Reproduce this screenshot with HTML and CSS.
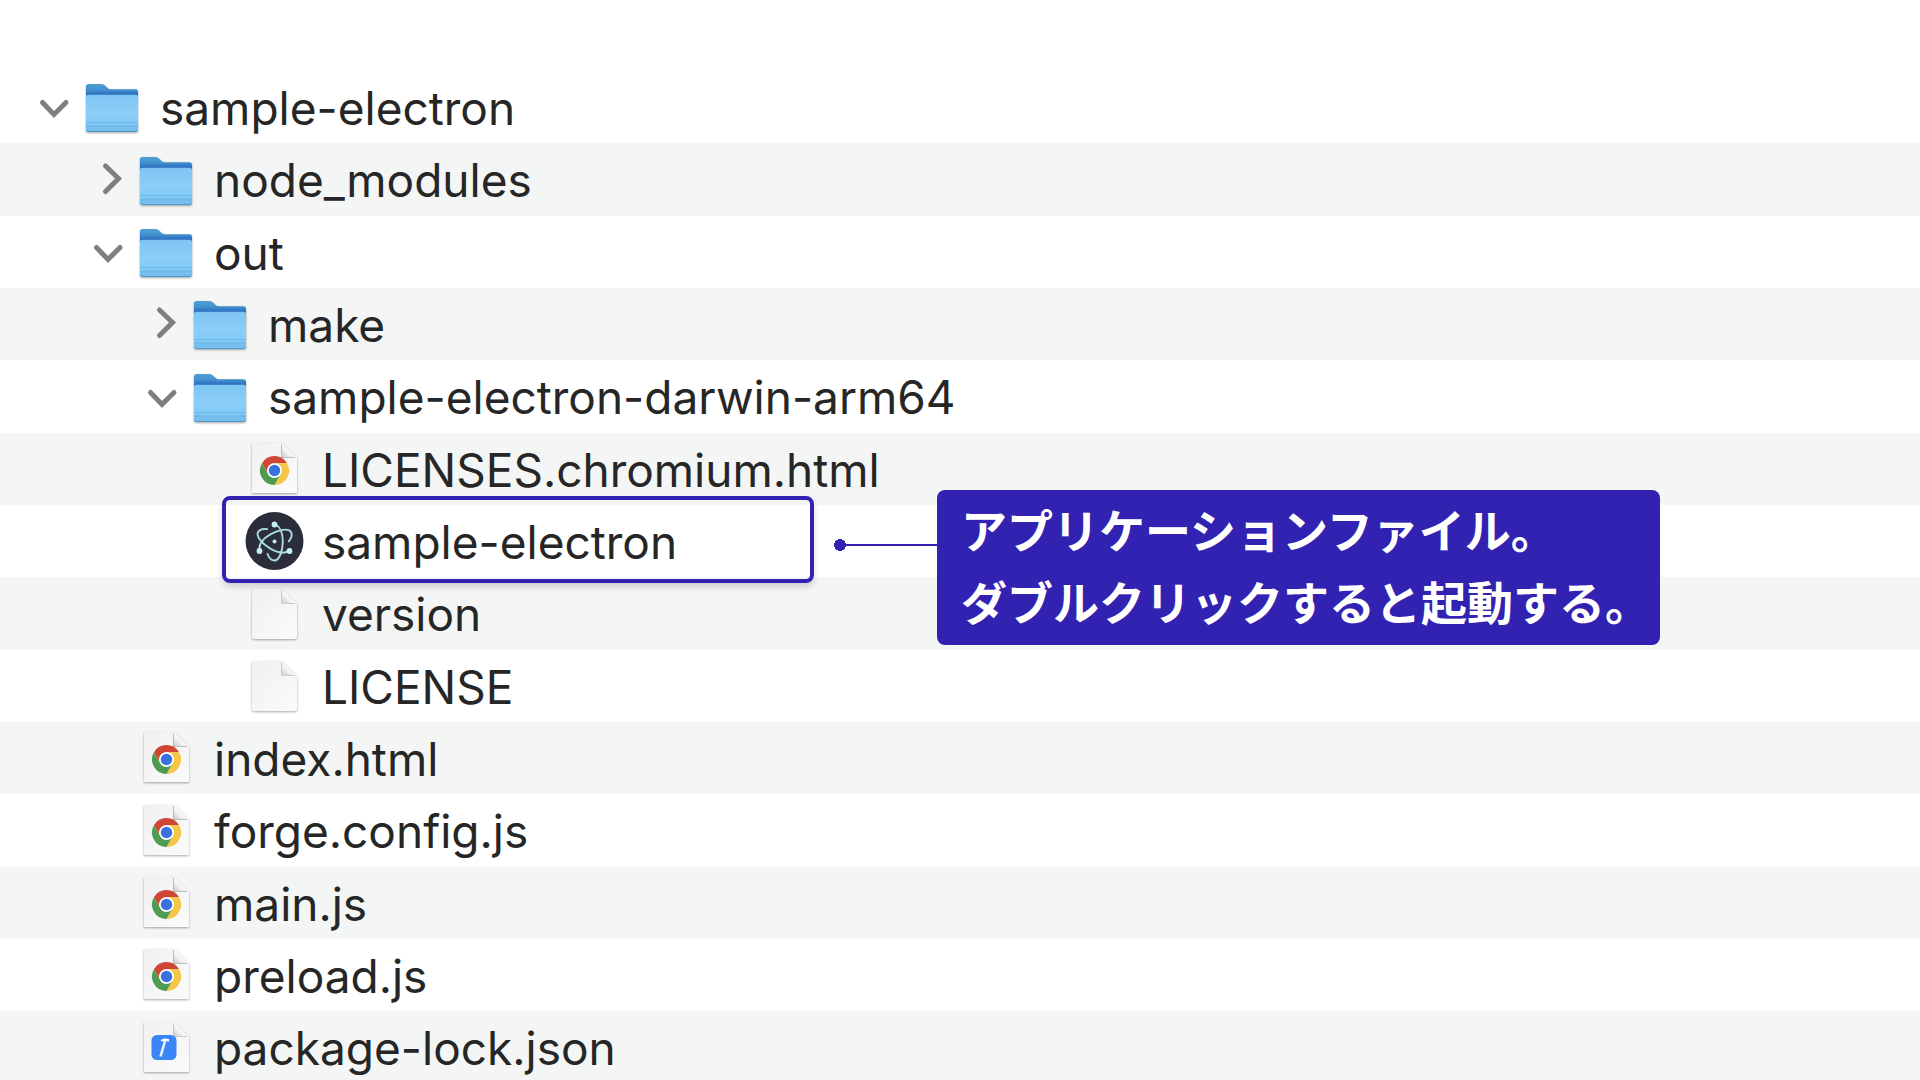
FILE: index.html
```
<!DOCTYPE html>
<html lang="ja">
<head>
	<meta charset="utf-8">
	<title>sample-electron</title>
	<link rel="stylesheet" href="styles.css">
</head>
<body>
	<svg class="sprite" aria-hidden="true">
		<defs>
			<linearGradient id="folderBack" x1="0" y1="0" x2="0" y2="1">
				<stop offset="0" stop-color="#4f9fd6"/>
				<stop offset="0.12" stop-color="#4390ce"/>
				<stop offset="0.22" stop-color="#2c6dbf"/>
			</linearGradient>
			<linearGradient id="folderFront" x1="0" y1="0" x2="0" y2="1">
				<stop offset="0" stop-color="#7fc5f3"/>
				<stop offset="0.5" stop-color="#8bcef9"/>
				<stop offset="1" stop-color="#7bc3f2"/>
			</linearGradient>
			<linearGradient id="paper" x1="0" y1="0" x2="1" y2="1">
				<stop offset="0" stop-color="#f0f0f0"/>
				<stop offset="1" stop-color="#fbfbfb"/>
			</linearGradient>
			<linearGradient id="fold" x1="0" y1="1" x2="1" y2="0">
				<stop offset="0" stop-color="#c4c4c4"/>
				<stop offset="0.4" stop-color="#f4f4f4"/>
				<stop offset="1" stop-color="#ffffff"/>
			</linearGradient>
		</defs>

		<symbol id="down" viewBox="0 0 36 36">
			<path d="M6.500 13.500L18 25.500L30 13.500" fill="none" stroke="#7f7f7f" stroke-width="5" stroke-linecap="round"/>
		</symbol>
		<symbol id="right" viewBox="0 0 36 36">
			<path d="M15.500 4L28.500 16.500L15.500 29.500" fill="none" stroke="#7f7f7f" stroke-width="5" stroke-linecap="round"/>
		</symbol>

		<symbol id="folder" viewBox="0 0 60 60">
			<path d="M4 9.500Q4 7 6.500 7H19Q21.500 7 23 8.500L25.500 11Q27 12.300 29 12.300H53.500Q56 12.300 56 15V52Q56 55 53 55H7Q4 55 4 52Z" fill="url(#folderBack)"/>
			<path d="M4 20Q4 17.700 6.500 17.700H53.500Q56 17.700 56 20V52Q56 55 53 55H7Q4 55 4 52Z" fill="url(#folderFront)"/>
			<path d="M4 48H56V52Q56 55 53 55H7Q4 55 4 52Z" fill="#76beed"/>
			<path d="M4 45.500H56M4 49.500H56" stroke="#6fb8e8" stroke-width="1"/>
			<path d="M5 53.500Q5.500 54.500 7 54.500H53Q54.500 54.500 55 53.500" stroke="#5296c4" fill="none"/>
		</symbol>

		<symbol id="page" viewBox="0 0 60 60">
			<path d="M8 7Q8 5 10 5H38L53 20V53Q53 55 51 55H10Q8 55 8 53Z" fill="url(#paper)"/>
			<path d="M37 5V18Q37 20 39 20H53L38 5Z" fill="url(#fold)"/>
			<path d="M37.500 6V18Q37.500 19.500 39 19.500H51" stroke="#c9c9c9" fill="none"/>
		</symbol>

		<symbol id="chrome" viewBox="0 0 60 60">
			<path d="M8 4H38L53 19V54H8Z" fill="url(#paper)"/>
			<path d="M37 4V19H53L38 4Z" fill="url(#fold)"/>
			<path d="M37.500 5V18.500H51" stroke="#bdbdbd" fill="none"/>
			<g transform="translate(30.500 31.500)">
				<path d="M0 -7.250H12.560A14.500 14.500 0 0 0 -12.560 -7.250L-6.280 3.630A7.250 7.250 0 0 1 0 -7.250Z" fill="#d04534"/>
				<path d="M0 -7.250H12.560A14.500 14.500 0 0 0 -12.560 -7.250L-6.280 3.630A7.250 7.250 0 0 1 0 -7.250Z" fill="#f5c544" transform="rotate(120)"/>
				<path d="M0 -7.250H12.560A14.500 14.500 0 0 0 -12.560 -7.250L-6.280 3.630A7.250 7.250 0 0 1 0 -7.250Z" fill="#4c9b50" transform="rotate(240)"/>
				<circle r="7.300" fill="#fff"/>
				<circle r="5.700" fill="#3871e0"/>
			</g>
		</symbol>

		<symbol id="json" viewBox="0 0 60 60">
			<path d="M8 4H38L53 19V54H8Z" fill="url(#paper)"/>
			<path d="M37 4V19H53L38 4Z" fill="url(#fold)"/>
			<path d="M37.500 5V18.500H51" stroke="#cccccc" fill="none"/>
			<rect x="15.500" y="17" width="25" height="25" rx="5.500" fill="#3b86f6"/>
			<path d="M29.500 21.500L24.500 38.500" stroke="#e6f0ff" stroke-width="2.600"/>
			<path d="M24.500 22.500Q27 19.500 33 21V23.500Q29 22.500 26.500 23.500Z" fill="#fff"/>
		</symbol>

		<symbol id="electron" viewBox="0 0 60 60">
			<circle cx="30.500" cy="30" r="29" fill="#2b2e3a"/>
			<g transform="translate(30.500 30.500)" fill="none" stroke="#a9dbe3" stroke-width="1.900" stroke-linecap="round">
				<path d="M1 -17C5 -15 8.300 -9 8.300 0C8.300 10 4.500 19 0 19C-3 19 -5.500 16.500 -7 12.500"/>
				<path d="M1 -17C5 -15 8.300 -9 8.300 0C8.300 10 4.500 19 0 19C-3 19 -5.500 16.500 -7 12.500" transform="rotate(120)"/>
				<path d="M1 -17C5 -15 8.300 -9 8.300 0C8.300 10 4.500 19 0 19C-3 19 -5.500 16.500 -7 12.500" transform="rotate(240)"/>
			</g>
			<g fill="#c4f0f4">
				<circle cx="30.500" cy="30.500" r="2"/>
				<circle cx="30.500" cy="13.500" r="2.900"/>
				<circle cx="45.500" cy="40" r="2.900"/>
				<circle cx="15.500" cy="40" r="2.900"/>
			</g>
		</symbol>
	</svg>

	<ul class="files">
		<li class="row">
			<button class="toggle" aria-label="sample-electron" aria-expanded="true"><svg><use href="#down"/></svg></button>
			<svg class="icon shadow"><use href="#folder"/></svg>
			<span class="name">sample-electron</span>
		</li>
		<li class="row level1">
			<button class="toggle" aria-label="node_modules" aria-expanded="false"><svg><use href="#right"/></svg></button>
			<svg class="icon shadow"><use href="#folder"/></svg>
			<span class="name">node_modules</span>
		</li>
		<li class="row level1">
			<button class="toggle" aria-label="out" aria-expanded="true"><svg><use href="#down"/></svg></button>
			<svg class="icon shadow"><use href="#folder"/></svg>
			<span class="name">out</span>
		</li>
		<li class="row level2">
			<button class="toggle" aria-label="make" aria-expanded="false"><svg><use href="#right"/></svg></button>
			<svg class="icon shadow"><use href="#folder"/></svg>
			<span class="name">make</span>
		</li>
		<li class="row level2">
			<button class="toggle" aria-label="sample-electron-darwin-arm64" aria-expanded="true"><svg><use href="#down"/></svg></button>
			<svg class="icon shadow"><use href="#folder"/></svg>
			<span class="name">sample-electron-darwin-arm64</span>
		</li>
		<li class="row level3 file">
			<svg class="icon shadow"><use href="#chrome"/></svg>
			<span class="name">LICENSES.chromium.html</span>
		</li>
		<li class="row level3 file selected">
			<svg class="icon"><use href="#electron"/></svg>
			<span class="name">sample-electron</span>
			<div class="frame"></div>
			<div class="note">
				<div class="leader"></div>
				<p class="bubble">アプリケーションファイル。<br>ダブルクリックすると起動する。</p>
			</div>
		</li>
		<li class="row level3 file">
			<svg class="icon shadow"><use href="#page"/></svg>
			<span class="name">version</span>
		</li>
		<li class="row level3 file">
			<svg class="icon shadow"><use href="#page"/></svg>
			<span class="name">LICENSE</span>
		</li>
		<li class="row level1 file">
			<svg class="icon shadow"><use href="#chrome"/></svg>
			<span class="name">index.html</span>
		</li>
		<li class="row level1 file">
			<svg class="icon shadow"><use href="#chrome"/></svg>
			<span class="name">forge.config.js</span>
		</li>
		<li class="row level1 file">
			<svg class="icon shadow"><use href="#chrome"/></svg>
			<span class="name">main.js</span>
		</li>
		<li class="row level1 file">
			<svg class="icon shadow"><use href="#chrome"/></svg>
			<span class="name">preload.js</span>
		</li>
		<li class="row level1 file">
			<svg class="icon shadow"><use href="#json"/></svg>
			<span class="name">package-lock.json</span>
		</li>
	</ul>
</body>
</html>
```
FILE: styles.css
```
body {
	margin: 0;
	height: 100vh;
	overflow: hidden;
	background: #fff;
	color: #262626;
	font-family: Inter, "Noto Sans CJK JP", sans-serif;
}

.sprite {
	position: absolute;
	width: 0;
	height: 0;
}

.files {
	display: grid;
	grid-auto-rows: 72px 73px 72px;
	margin: 0;
	padding: 71px 0 0;
	list-style: none;
}

.row {
	display: flex;
	align-items: center;
	padding-left: 36px;
	font-size: 46px;
	line-height: 70px;
	white-space: nowrap;
}

.row:nth-child(even) {
	background: #f4f6f5;
}

/* one indent step is 54px, files have no toggle (46px) */
.level1 {
	padding-left: 90px;
}

.level2 {
	padding-left: 144px;
}

.level1.file {
	padding-left: 136px;
}

.level3.file {
	padding-left: 244px;
}

.toggle {
	width: 36px;
	height: 36px;
	margin: 0 10px 0 0;
	padding: 0;
	border: 0;
	background: none;
}

.toggle svg {
	display: block;
	width: 36px;
	height: 36px;
}

.icon {
	flex: none;
	width: 60px;
	height: 60px;
	margin-right: 18px;
	overflow: visible;
}

.name {
	padding-top: 1px;
}

.shadow {
	filter: drop-shadow(0 1px 1px rgba(0, 0, 0, 0.35));
}

.selected {
	position: relative;
}

.frame {
	position: absolute;
	top: -9px;
	left: 222px;
	box-sizing: border-box;
	width: 592px;
	height: 87px;
	border: 4px solid #3222b2;
	border-radius: 8px;
	box-shadow: 0 4px 6px rgba(0, 0, 0, 0.15);
}

.note {
	position: absolute;
	top: -15px;
	left: 834px;
	display: flex;
	align-items: flex-start;
}

.leader {
	width: 103px;
	height: 12px;
	margin-top: 49px;
	background:
		radial-gradient(circle at 6px 6px, #3222b2 6px, transparent 6px),
		linear-gradient(#3222b2, #3222b2) 6px 5px / 100% 2px no-repeat;
}

.bubble {
	margin: 0;
	padding: 2px 9px 9px 24px;
	border-radius: 8px;
	background: #3222b2;
	color: #fff;
	font-family: "Noto Sans CJK JP", sans-serif;
	font-size: 46px;
	font-weight: bold;
	line-height: 72px;
}
```
